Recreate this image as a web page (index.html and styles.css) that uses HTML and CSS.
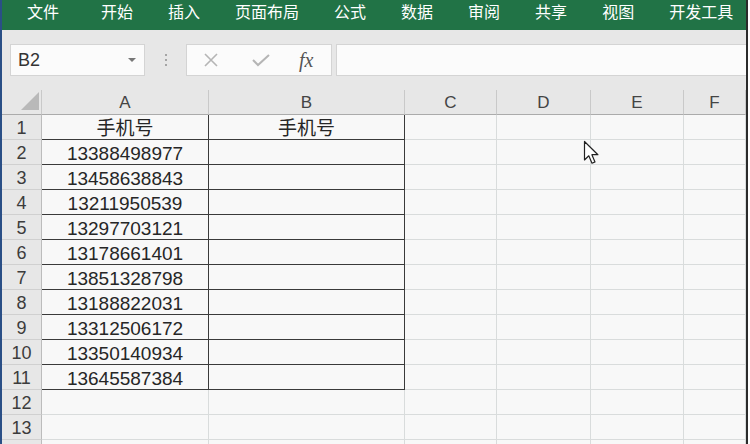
FILE: index.html
```html
<!DOCTYPE html>
<html lang="zh">
<head>
<meta charset="utf-8">
<link rel="stylesheet" href="styles.css">
</head>
<body>
<div class="window">
  <div class="ribbon">
    <span class="tab first">文件</span>
    <span class="tab">开始</span>
    <span class="tab">插入</span>
    <span class="tab">页面布局</span>
    <span class="tab">公式</span>
    <span class="tab">数据</span>
    <span class="tab">审阅</span>
    <span class="tab">共享</span>
    <span class="tab">视图</span>
    <span class="tab">开发工具</span>
  </div>
  <div class="fbar">
    <div class="namebox"><span>B2</span><svg class="drop" width="8" height="5" viewBox="0 0 8 5"><path d="M0 0h8L4 4z" fill="#777"/></svg></div>
    <div class="sep"><i></i><i></i><i></i></div>
    <div class="fxbox">
      <svg class="ico" width="18" height="18" viewBox="0 0 18 18"><path d="M3 3l12 12M15 3L3 15" stroke="#b5b5b5" stroke-width="1.6" fill="none"/></svg>
      <svg class="ico" width="20" height="18" viewBox="0 0 20 18"><path d="M2 9l5 5L18 4" stroke="#b5b5b5" stroke-width="2" fill="none"/></svg>
      <span class="fx">fx</span>
    </div>
    <div class="finput"></div>
  </div>
  <div class="sheet">
    <div class="corner"><svg width="20" height="20" viewBox="0 0 20 20"><path d="M19 1V19H1z" fill="#b9b9b9"/></svg></div>
    <div class="ch">A</div><div class="ch">B</div><div class="ch">C</div><div class="ch">D</div><div class="ch">E</div><div class="ch">F</div>

    <div class="rh">1</div><div class="c t">手机号</div><div class="c t">手机号</div><div class="c"></div><div class="c"></div><div class="c"></div><div class="c"></div>
    <div class="rh">2</div><div class="c t">13388498977</div><div class="c t"></div><div class="c"></div><div class="c"></div><div class="c"></div><div class="c"></div>
    <div class="rh">3</div><div class="c t">13458638843</div><div class="c t"></div><div class="c"></div><div class="c"></div><div class="c"></div><div class="c"></div>
    <div class="rh">4</div><div class="c t">13211950539</div><div class="c t"></div><div class="c"></div><div class="c"></div><div class="c"></div><div class="c"></div>
    <div class="rh">5</div><div class="c t">13297703121</div><div class="c t"></div><div class="c"></div><div class="c"></div><div class="c"></div><div class="c"></div>
    <div class="rh">6</div><div class="c t">13178661401</div><div class="c t"></div><div class="c"></div><div class="c"></div><div class="c"></div><div class="c"></div>
    <div class="rh">7</div><div class="c t">13851328798</div><div class="c t"></div><div class="c"></div><div class="c"></div><div class="c"></div><div class="c"></div>
    <div class="rh">8</div><div class="c t">13188822031</div><div class="c t"></div><div class="c"></div><div class="c"></div><div class="c"></div><div class="c"></div>
    <div class="rh">9</div><div class="c t">13312506172</div><div class="c t"></div><div class="c"></div><div class="c"></div><div class="c"></div><div class="c"></div>
    <div class="rh">10</div><div class="c t">13350140934</div><div class="c t"></div><div class="c"></div><div class="c"></div><div class="c"></div><div class="c"></div>
    <div class="rh">11</div><div class="c t">13645587384</div><div class="c t"></div><div class="c"></div><div class="c"></div><div class="c"></div><div class="c"></div>
    <div class="rh">12</div><div class="c"></div><div class="c"></div><div class="c"></div><div class="c"></div><div class="c"></div><div class="c"></div>
    <div class="rh">13</div><div class="c"></div><div class="c"></div><div class="c"></div><div class="c"></div><div class="c"></div><div class="c"></div>
    <div class="rh"></div><div class="c"></div><div class="c"></div><div class="c"></div><div class="c"></div><div class="c"></div><div class="c"></div>
  </div>
  <svg class="cursor" width="18" height="26" viewBox="0 0 18 26"><path d="M1.5 1.5V20l4.3-4.2 3.2 7.4 3-1.3-3.1-7.2h6z" fill="#fff" stroke="#222" stroke-width="1.2" stroke-linejoin="round"/></svg>
</div>
</body>
</html>
```

FILE: styles.css
```css
* { box-sizing: border-box; }
html, body { margin: 0; padding: 0; }
body {
  width: 750px;
  height: 444px;
  overflow: hidden;
  background: #ffffff;
  font-family: "Liberation Sans", "Noto Sans CJK SC", sans-serif;
}
.window {
  position: relative;
  width: 748px;
  height: 444px;
  border-left: 2px solid #2a4f86;
  border-right: 2px solid #2b2b2b;
  background: #e7e7e7;
  overflow: hidden;
}
.ribbon {
  height: 30px;
  background: #217346;
  display: flex;
  align-items: flex-start;
  gap: 35px;
  padding-left: 25px;
  color: #ffffff;
  font-family: "Noto Sans CJK SC", sans-serif;
  font-size: 16px;
  line-height: 22px;
}
.tab.first { margin-right: 7px; }
.fbar {
  display: flex;
  align-items: stretch;
  height: 60px;
  padding: 14px 0 14px 8px;
}
.namebox {
  width: 135px;
  background: #fbfbfb;
  border: 1px solid #d4d4d4;
  display: flex;
  align-items: center;
  justify-content: space-between;
  padding: 0 8px 0 7px;
  font-size: 18px;
  color: #333;
}
.namebox .drop { margin-top: 1px; }
.sep {
  width: 41px;
  display: flex;
  flex-direction: column;
  align-items: center;
  justify-content: center;
  gap: 3px;
}
.sep i {
  display: block;
  width: 2px;
  height: 2px;
  background: #a5a5a5;
}
.fxbox {
  width: 146px;
  background: #fbfbfb;
  border: 1px solid #d4d4d4;
  display: flex;
  align-items: center;
  padding-left: 15px;
  gap: 31px;
}
.fx {
  font-family: "Liberation Serif", serif;
  font-style: italic;
  font-size: 20px;
  color: #555;
  margin-left: -3px;
}
.finput {
  flex: 1;
  margin-left: 4px;
  background: #fbfbfb;
  border: 1px solid #d4d4d4;
  border-right: none;
}
.sheet {
  display: grid;
  grid-template-columns: 40px 167px 196px 92px 94px 93px 62px;
  grid-auto-rows: 25px;
}
.corner {
  background: #e7e7e7;
  border-right: 1px solid #c9c9c9;
  border-bottom: 1px solid #ababab;
  display: flex;
  align-items: flex-end;
  justify-content: flex-end;
  padding: 0 1px 3px 0;
}
.ch {
  background: #e7e7e7;
  border-right: 1px solid #c9c9c9;
  border-bottom: 1px solid #ababab;
  text-align: center;
  font-size: 17px;
  line-height: 26px;
  color: #444;
}
.rh {
  background: #e7e7e7;
  border-right: 1px solid #bcbcbc;
  border-bottom: 1px solid #d0d0d0;
  text-align: center;
  font-size: 18px;
  line-height: 27px;
  color: #3c3c3c;
}
.c {
  background: #f8f8f8;
  border-right: 1px solid #d9dcdc;
  border-bottom: 1px solid #d9dcdc;
  text-align: center;
  font-size: 19px;
  line-height: 27px;
  color: #262626;
  font-family: "Liberation Sans", "Noto Sans CJK SC", sans-serif;
}
.c.t {
  border-right-color: #3a3a3a;
  border-bottom-color: #3a3a3a;
}
.cursor {
  position: absolute;
  left: 581px;
  top: 140px;
}
```
